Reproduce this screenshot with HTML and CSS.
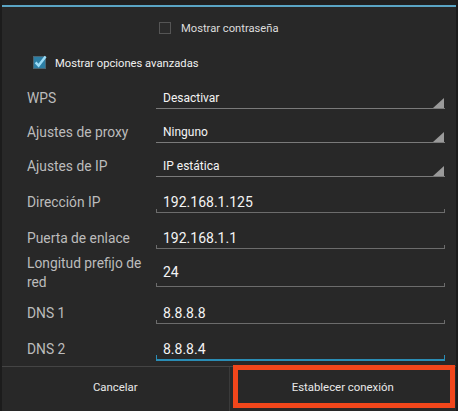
FILE: index.html
```html
<!DOCTYPE html>
<html>
<head>
  <title>Configuración de red</title>
  <link rel="stylesheet" href="styles.css">
</head>
<body>

  <div class="dialog">
    <!-- Top accent line -->
    <div class="topline"></div>

    <!-- Checkboxes -->
    <div class="check-row pass">
      <span class="box"></span>
      <span>Mostrar contraseña</span>
    </div>
    <div class="check-row adv">
      <svg class="box-checked" width="16" height="16" viewBox="0 0 16 16">
        <rect x="0.5" y="2.5" width="12" height="12" fill="#2c7ea4" stroke="#4b6572"/>
        <path d="M2.6 8.4 L5.6 11.6 L12.6 2.6" stroke="#9bdcf7" stroke-width="2.4" fill="none"/>
      </svg>
      <span>Mostrar opciones avanzadas</span>
    </div>

    <!-- Advanced fields -->
    <div class="fields">
      <div class="field spin">
        <div class="label">WPS</div>
        <div class="value">Desactivar<svg class="tri" width="11" height="10" viewBox="0 0 11 10"><polygon points="11,0 11,10 0,10" fill="#9a9a9a"/></svg></div>
      </div>
      <div class="field spin">
        <div class="label">Ajustes de proxy</div>
        <div class="value">Ninguno<svg class="tri" width="11" height="10" viewBox="0 0 11 10"><polygon points="11,0 11,10 0,10" fill="#9a9a9a"/></svg></div>
      </div>
      <div class="field spin last-spin">
        <div class="label">Ajustes de IP</div>
        <div class="value">IP estática<svg class="tri" width="11" height="10" viewBox="0 0 11 10"><polygon points="11,0 11,10 0,10" fill="#9a9a9a"/></svg></div>
      </div>
      <div class="field edit">
        <div class="label">Dirección IP</div>
        <div class="value">192.168.1.125</div>
      </div>
      <div class="field edit short">
        <div class="label">Puerta de enlace</div>
        <div class="value">192.168.1.1</div>
      </div>
      <div class="field edit tall">
        <div class="label">Longitud prefijo de red</div>
        <div class="value">24</div>
      </div>
      <div class="field edit">
        <div class="label">DNS 1</div>
        <div class="value">8.8.8.8</div>
      </div>
      <div class="field edit focused">
        <div class="label">DNS 2</div>
        <div class="value">8.8.8.4</div>
      </div>
    </div>

    <!-- Buttons -->
    <div class="actions">
      <button class="btn">Cancelar</button>
      <button class="btn connect">Establecer conexión</button>
      <div class="highlight"></div>
    </div>
  </div>

</body>
</html>
```

FILE: styles.css
```css
body {
  margin: 0;
  background-color: #1c1c1c;
  font-family: Roboto, "Noto Sans", Arial, sans-serif;
  color: #e6e6e6;
}
.dialog {
  margin: 0 2px;
  width: 454px;
  height: 411px;
  background-color: #282828;
  position: relative;
  overflow: hidden;
}
.topline {
  height: 5px;
  background-color: #202020;
  border-bottom: 2px solid #5aa4c4;
}
/* Checkbox rows */
.check-row {
  display: flex;
  align-items: center;
  height: 20px;
  font-size: 11.2px;
}
.check-row.pass {
  margin-top: 11px;
  padding-left: 157px;
  color: #dcdcdc;
}
.check-row.adv {
  margin-top: 15px;
  padding-left: 31px;
  color: #f0f0f0;
}
.box {
  width: 10px;
  height: 10px;
  border: 1px solid #555;
  background-color: #2b2b2b;
  margin-right: 10px;
}
.box-checked {
  margin-right: 6px;
  margin-top: -2px;
}
/* Fields */
.fields {
  margin-top: 15px;
  padding-left: 25px;
}
.field {
  display: flex;
  align-items: flex-start;
}
.label {
  width: 129px;
  font-size: 13.8px;
  line-height: 20px;
  color: #bcbcbc;
}
.value {
  width: 282px;
  height: 20px;
  line-height: 20px;
  padding-left: 7px;
  border-bottom: 1px solid #6c6c6c;
  color: #f4f4f4;
  position: relative;
}
.spin {
  height: 34px;
}
.last-spin {
  height: 36px;
}
.spin .value {
  display: flex;
  font-size: 12px;
  border-bottom-color: #7a7a7a;
}
.tri {
  margin-left: auto;
  margin-right: 1px;
  align-self: flex-end;
}
.edit {
  height: 36px;
}
.edit .value {
  font-size: 14px;
}
.edit .value::before,
.edit .value::after {
  content: "";
  position: absolute;
  bottom: 0;
  width: 1px;
  height: 3px;
  background-color: #6c6c6c;
}
.edit .value::before {
  left: 0;
}
.edit .value::after {
  right: 0;
}
.short {
  height: 26px;
}
.tall {
  height: 49px;
}
.tall .label {
  line-height: 19px;
}
.tall .value {
  margin-top: 8px;
  padding-bottom: 4px;
}
.focused .value {
  border-bottom: 2px solid #2a8db5;
}
.focused .value::before,
.focused .value::after {
  background-color: #2a8db5;
  height: 4px;
}
/* Buttons */
.actions {
  position: absolute;
  left: 0;
  right: 0;
  top: 366px;
  bottom: 0;
  display: flex;
  border-top: 1px solid #444;
}
.btn {
  flex: 1 1 0;
  background: none;
  border: none;
  color: #e8e8e8;
  font-family: Roboto, "Noto Sans", Arial, sans-serif;
  font-size: 11.4px;
  padding: 0;
  padding-bottom: 4px;
}
.connect {
  border-left: 1px solid #3a3a3a;
}
.highlight {
  position: absolute;
  left: 231px;
  right: 1px;
  top: -2px;
  bottom: 3px;
  border: 5px solid #f1461b;
}
```
